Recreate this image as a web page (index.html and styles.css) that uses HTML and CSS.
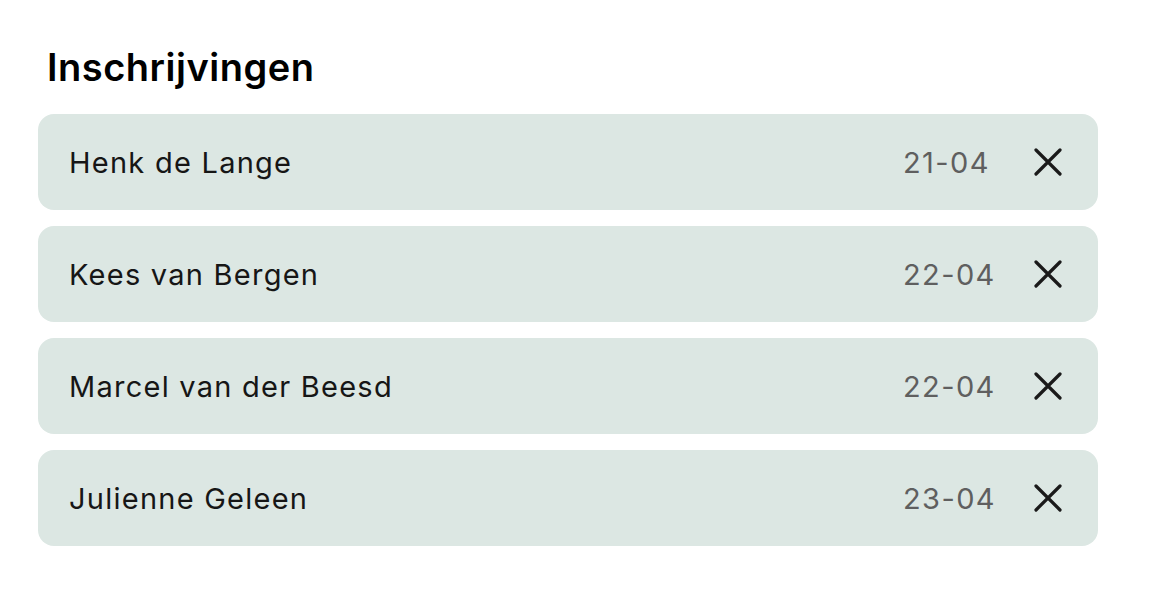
FILE: index.html
```html
<!DOCTYPE html>
<html lang="nl">
<head>
<meta charset="utf-8">
<title>Inschrijvingen</title>
<link rel="stylesheet" href="styles.css">
</head>
<body>
<main class="panel">
  <h1 class="title">Inschrijvingen</h1>
  <ul class="list">
    <li class="row"><span class="name">Henk de Lange</span><span class="date">21-04</span><button class="remove" aria-label="Verwijderen"><svg viewBox="0 0 28 28" width="28" height="28"><path d="M2 2 L26 26 M26 2 L2 26" /></svg></button></li>
    <li class="row"><span class="name">Kees van Bergen</span><span class="date">22-04</span><button class="remove" aria-label="Verwijderen"><svg viewBox="0 0 28 28" width="28" height="28"><path d="M2 2 L26 26 M26 2 L2 26" /></svg></button></li>
    <li class="row"><span class="name">Marcel van der Beesd</span><span class="date">22-04</span><button class="remove" aria-label="Verwijderen"><svg viewBox="0 0 28 28" width="28" height="28"><path d="M2 2 L26 26 M26 2 L2 26" /></svg></button></li>
    <li class="row"><span class="name">Julienne Geleen</span><span class="date">23-04</span><button class="remove" aria-label="Verwijderen"><svg viewBox="0 0 28 28" width="28" height="28"><path d="M2 2 L26 26 M26 2 L2 26" /></svg></button></li>
  </ul>
</main>
</body>
</html>
```
FILE: styles.css
```css
* { box-sizing: border-box; }
html, body { margin: 0; padding: 0; background: #ffffff; }
body { font-family: Inter, "Liberation Sans", Arial, sans-serif; color: #161616; }
.panel { width: 1060px; margin-left: 38px; padding-top: 44px; }
.title {
  margin: 0 0 0 9px;
  font-size: 38px;
  line-height: 46px;
  font-weight: 600;
  letter-spacing: 0.5px;
  color: #000;
  height: 70px;
}
.list { list-style: none; margin: 0; padding: 0; display: flex; flex-direction: column; gap: 16px; }
.row {
  height: 96px;
  background: #dce7e3;
  border-radius: 16px;
  display: grid;
  grid-template-columns: 1fr 131px 28px;
  align-items: center;
  padding: 0 36px 0 31px;
}
.name { font-size: 29px; font-weight: 400; letter-spacing: 1.25px; color: #161616; }
.date { font-size: 29px; letter-spacing: 1.4px; color: #5f5f5f; }
.remove {
  width: 28px; height: 28px; padding: 0; border: 0; background: none;
  display: flex; align-items: center; justify-content: center; cursor: pointer;
}
.remove svg { display: block; }
.remove path { stroke: #1a1a1a; stroke-width: 3.2; stroke-linecap: round; fill: none; }
```
